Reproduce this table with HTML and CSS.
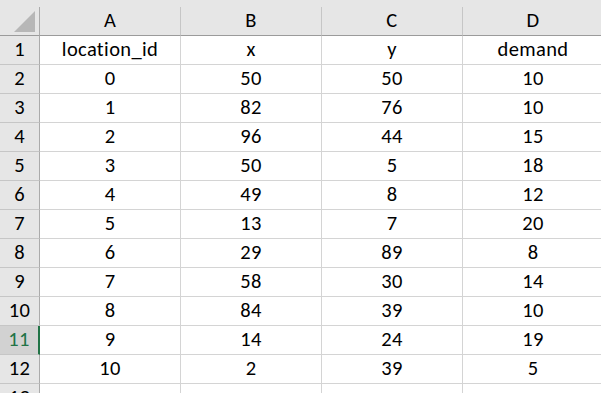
FILE: index.html
```html
<!DOCTYPE html>
<html>
<head>
<meta charset="utf-8">
<link rel="stylesheet" href="styles.css">
</head>
<body>
<div class="topbar"></div>
<div class="sheet">
  <div class="corner"><svg width="21" height="21" viewBox="0 0 21 21"><polygon points="21,0 21,21 0,21" fill="#b7b7b7"/></svg></div>
  <div class="colhead">A</div><div class="colhead">B</div><div class="colhead">C</div><div class="colhead">D</div>

  <div class="rowhead">1</div><div class="cell">location_id</div><div class="cell">x</div><div class="cell">y</div><div class="cell">demand</div>
  <div class="rowhead">2</div><div class="cell">0</div><div class="cell">50</div><div class="cell">50</div><div class="cell">10</div>
  <div class="rowhead">3</div><div class="cell">1</div><div class="cell">82</div><div class="cell">76</div><div class="cell">10</div>
  <div class="rowhead">4</div><div class="cell">2</div><div class="cell">96</div><div class="cell">44</div><div class="cell">15</div>
  <div class="rowhead">5</div><div class="cell">3</div><div class="cell">50</div><div class="cell">5</div><div class="cell">18</div>
  <div class="rowhead">6</div><div class="cell">4</div><div class="cell">49</div><div class="cell">8</div><div class="cell">12</div>
  <div class="rowhead">7</div><div class="cell">5</div><div class="cell">13</div><div class="cell">7</div><div class="cell">20</div>
  <div class="rowhead">8</div><div class="cell">6</div><div class="cell">29</div><div class="cell">89</div><div class="cell">8</div>
  <div class="rowhead">9</div><div class="cell">7</div><div class="cell">58</div><div class="cell">30</div><div class="cell">14</div>
  <div class="rowhead">10</div><div class="cell">8</div><div class="cell">84</div><div class="cell">39</div><div class="cell">10</div>
  <div class="rowhead selected">11</div><div class="cell">9</div><div class="cell">14</div><div class="cell">24</div><div class="cell">19</div>
  <div class="rowhead">12</div><div class="cell">10</div><div class="cell">2</div><div class="cell">39</div><div class="cell">5</div>
  <div class="rowhead">13</div><div class="cell"></div><div class="cell"></div><div class="cell"></div><div class="cell"></div>
</div>
</body>
</html>
```

FILE: styles.css
```css
html, body {
  margin: 0;
  padding: 0;
  background: #ffffff;
  overflow: hidden;
}
body {
  width: 601px;
  height: 393px;
  font-family: "Carlito", "Lato", "Liberation Sans", sans-serif;
  font-size: 20.5px;
  letter-spacing: 0.35px;
  color: #000000;
}
.topbar {
  height: 7px;
  background: #e6e6e6;
}
.sheet {
  display: grid;
  grid-template-columns: 40px 141px 141px 141px 141px;
  grid-auto-rows: 29px;
  width: 604px;
}
.sheet > div {
  box-sizing: border-box;
  border-right: 1px solid #d4d4d4;
  border-bottom: 1px solid #d4d4d4;
  text-align: center;
  line-height: 27px;
  white-space: nowrap;
  overflow: hidden;
}
.corner {
  background: #e6e6e6;
  display: flex;
  justify-content: flex-end;
  align-items: flex-end;
  padding: 0 4px 3px 0;
  border-right-color: #ababab !important;
  border-bottom-color: #9b9b9b !important;
}
.corner svg {
  display: block;
}
.colhead {
  background: #e6e6e6;
  border-right-color: #c6c6c6 !important;
  border-bottom-color: #9b9b9b !important;
}
.rowhead {
  background: #e6e6e6;
  border-right-color: #ababab !important;
  border-bottom-color: #c6c6c6 !important;
}
.rowhead.selected {
  background: #d2d2d2;
  color: #217346;
  border-right: 2px solid #217346 !important;
}
```
